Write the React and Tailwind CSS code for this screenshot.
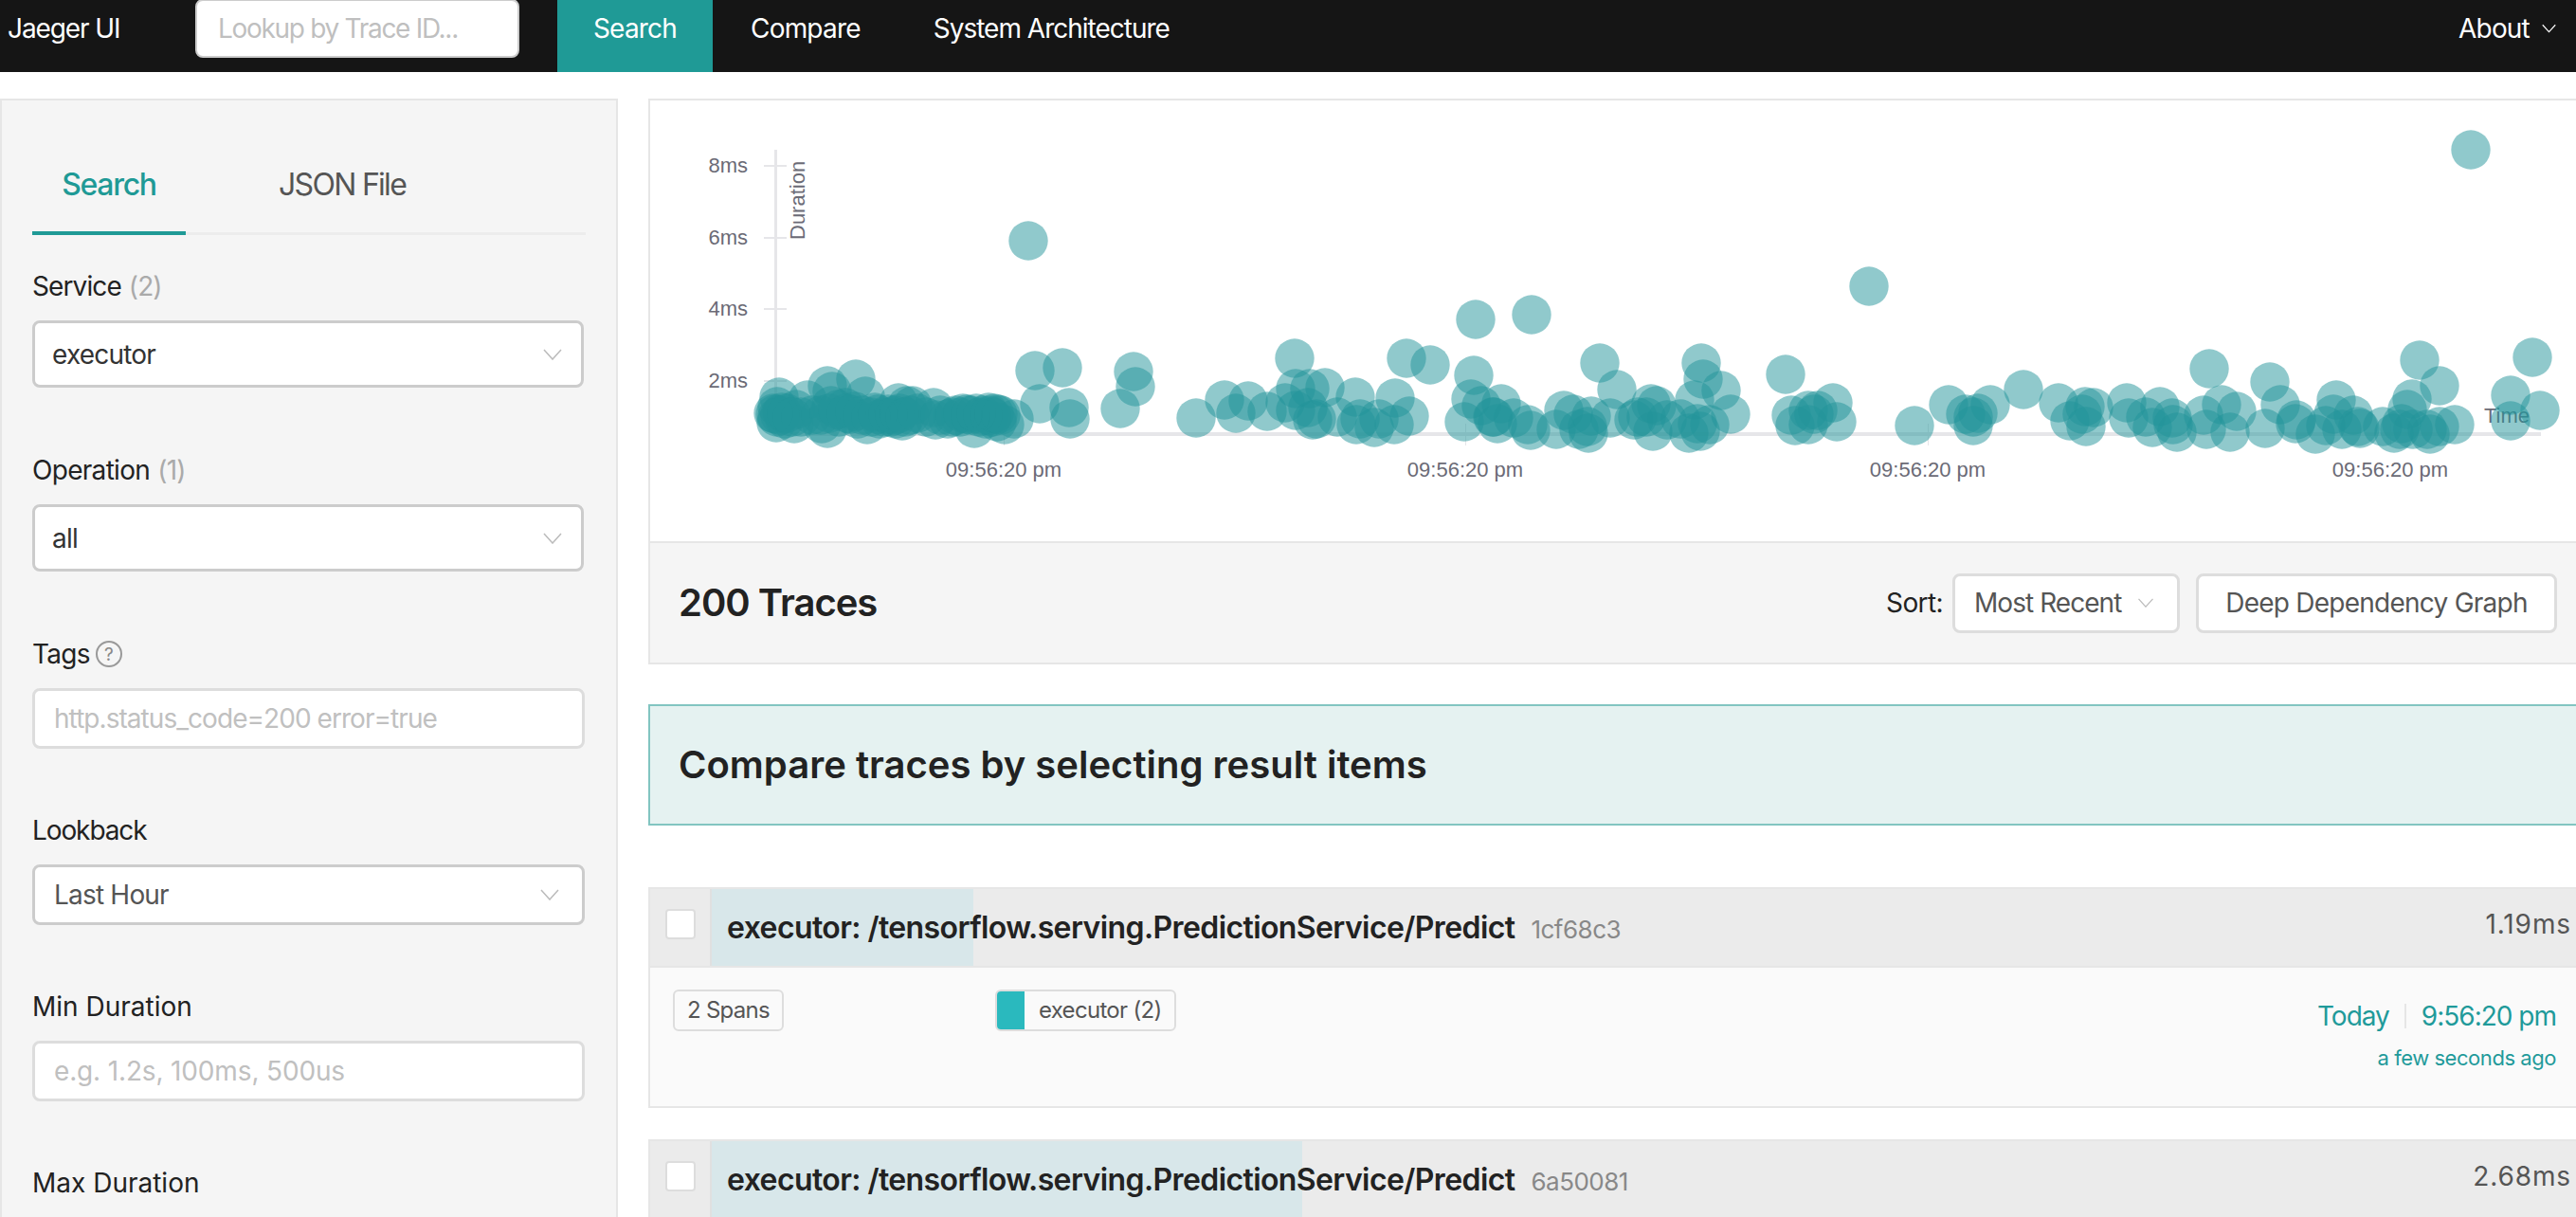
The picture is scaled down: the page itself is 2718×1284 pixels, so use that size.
import React from "react";

const font = { fontFamily: "Inter, 'Noto Sans', sans-serif" };

// scatter points, in page pixels
const dots = [
  [822,419],[820,429],[818,437],[819,446],[838,447],[852,422],[873,407],[878,413],[903,400],[913,418],[873,452],[867,447],[915,448],[892,430],[877,428],[897,437],[840,432],[857,438],[825,435],[923,435],[933,440],[940,440],[948,425],[957,428],[963,428],[960,438],[985,430],[977,440],[987,443],[1005,440],[1020,437],[1013,440],[1028,452],[1043,435],[1053,437],[1047,440],[1060,448],[1070,442],[1033,440],[1052,445],[820,440],[828,442],[845,440],[885,440],[905,442],[928,442],[945,442],[952,444],[1000,442],[1040,442],
  [816,436],[823,438],[830,436],[836,440],[866,438],[875,436],[884,432],[893,436],[902,434],[910,438],[919,440],[926,437],[937,437],[944,438],[949,436],[955,440],[968,436],[992,438],[1008,438],[1016,436],[1024,438],[1030,436],[1037,438],[1044,438],[1049,436],[1056,438],
  [1085,254],[1092,391],[1121,388],[1097,426],[1128,430],[1129,442],[1196,392],[1198,408],[1182,431],[1262,441],[1292,422],[1304,436],[1317,423],[1337,434],[1356,425],[1366,378],[1367,410],[1367,433],[1385,443],[1398,409],[1430,419],[1472,420],[1487,439],[1471,448],[1455,442],[1450,451],[1435,442],[1431,448],[1411,440],[1389,442],[1382,410],[1380,430],
  [1484,378],[1509,385],[1557,337],[1616,332],[1972,302],[1555,396],[1552,421],[1563,428],[1584,426],[1545,445],[1576,440],[1580,447],[1575,440],[1597,441],[1615,454],[1612,448],[1642,453],[1650,433],[1660,437],[1679,439],[1666,453],[1676,457],[1675,450],[1699,441],[1688,383],[1706,411],[1724,443],[1728,440],[1742,426],[1748,428],[1744,455],[1737,440],[1759,443],[1788,422],[1795,383],[1797,400],[1816,412],[1826,437],[1782,457],[1794,455],[1804,448],[1773,442],[1791,447],
  [1884,395],[1890,438],[1894,449],[1908,433],[1908,448],[1914,437],[1934,425],[1938,445],[1918,433],[2020,449],[2056,427],[2074,437],[2100,427],[2087,436],[2082,449],[2082,440],[2135,411],[2172,425],[2184,444],[2200,429],[2209,430],[2197,437],[2201,450],[2244,425],[2246,441],[2264,440],[2279,429],[2271,451],[2292,441],[2293,448],[2297,456],[2325,438],[2328,453],[2344,427],[2360,434],[2353,456],[2331,389],[2390,452],[2395,403],[2406,427],[2423,443],[2443,458],[2422,447],[2454,449],[2465,422],[2462,437],[2483,438],[2471,453],[2490,452],[2488,450],[2514,450],[2526,457],[2534,447],[2545,421],[2540,432],[2553,380],[2574,407],[2532,453],[2561,453],[2564,458],[2574,450],[2590,448],[2546,453],[2607,158],[2649,417],[2672,377],[2680,433],[2649,444],
];

function Chevron({ className }) {
  return (
    <svg className={className} viewBox="0 0 20 12" fill="none" stroke="currentColor" strokeWidth="1.5">
      <polyline points="1,1 10,11 19,1" />
    </svg>
  );
}

function Chart() {
  const axis = "#e6e6e9";
  const label = { fontFamily: "'Liberation Sans', Arial, sans-serif", fontSize: 22, fill: "#6b6b76" };
  return (
    <div className="h-[467px] border-l-2 border-t-2 border-[#e6e6e6] bg-white">
      <svg width="2032" height="465" viewBox="686 106 2032 465" className="block">
        <rect x="817" y="158" width="3" height="301" fill={axis} />
        <rect x="817" y="456" width="1864" height="4" fill={axis} />
        {[[175, "8ms"], [251, "6ms"], [326, "4ms"], [402, "2ms"]].map(([y, t]) => (
          <g key={t}>
            <rect x="806" y={y - 1} width="24" height="2" fill={axis} />
            <text x="789" y={y + 7} textAnchor="end" {...label}>{t}</text>
          </g>
        ))}
        {[1059, 1546, 2034, 2522].map((x) => (
          <g key={x}>
            <rect x={x} y="447" width="1" height="23" fill={axis} />
            <text x={x} y="503" textAnchor="middle" {...label}>09:56:20 pm</text>
          </g>
        ))}
        <text transform="translate(849 253) rotate(-90)" {...label}>Duration</text>
        <text x="2621" y="446" {...label}>Time</text>
        {dots.map(([x, y], i) => (
          <circle key={i} cx={x} cy={y} r="20.7" fill="#21939a" fillOpacity="0.5" />
        ))}
      </svg>
    </div>
  );
}

function Field({ label, count, help, children, className }) {
  return (
    <div className={className}>
      <div className="flex h-[38px] items-center text-[28px] leading-[38px] text-[#222]">
        {label}
        {count && <span className="ml-[8px] text-[#aaa]">{count}</span>}
        {help && (
          <span className="ml-[6px] flex h-[28px] w-[28px] items-center justify-center rounded-full border-2 border-[#999] text-[19px] leading-none tracking-normal text-[#888]">?</span>
        )}
      </div>
      {children}
    </div>
  );
}

function Select({ value, tall }) {
  return (
    <div
      className={`flex items-center justify-between rounded-lg border-[3px] border-[#ccc] bg-white ${
        tall ? "mt-[17px] h-[71px] w-[582px] pl-[18px] pr-[20px] text-[#333]" : "mt-[17px] h-[64px] w-[583px] pl-[20px] pr-[24px] text-[#555]"
      } text-[28px] tracking-[-0.8px]`}
    >
      <span>{value}</span>
      <Chevron className="h-[12px] w-[20px] text-[#bbb]" />
    </div>
  );
}

function TextInput({ placeholder, className }) {
  return (
    <div className={`mt-[17px] flex h-[64px] w-[583px] items-center rounded-lg border-[3px] border-[#ddd] bg-white pl-[20px] text-[28px] text-[#c0c0c0] ${className}`}>
      {placeholder}
    </div>
  );
}

function Sidebar() {
  return (
    <aside className="h-[1180px] w-[652px] shrink-0 border-l-2 border-r-2 border-t-2 border-[#e6e6e6] bg-[#f5f5f5] pl-[32px] pr-[32px]">
      <div className="mt-[52px] flex h-[90px] w-[584px] items-start border-b-[3px] border-[#ececec] text-[32px] leading-[74px]">
        <div className="-mb-[3px] flex h-[90px] w-[162px] justify-center border-b-[4px] border-[#1f9a96] font-medium tracking-[-1.3px] text-[#1f9a96]">Search</div>
        <div className="ml-[98px] tracking-[-1.7px] text-[#555]">JSON File</div>
      </div>
      <Field label="Service" count="(2)" className="mt-[35px] tracking-[-0.9px]"><Select value="executor" tall /></Field>
      <Field label="Operation" count="(1)" className="mt-[68px] tracking-[-0.7px]"><Select value="all" tall /></Field>
      <Field label="Tags" help className="mt-[68px] tracking-[-0.7px]"><TextInput placeholder="http.status_code=200 error=true" className="tracking-[-0.95px]" /></Field>
      <Field label="Lookback" className="mt-[67px] tracking-[-1.1px]"><Select value="Last Hour" /></Field>
      <Field label="Min Duration" className="mt-[67px]"><TextInput placeholder="e.g. 1.2s, 100ms, 500us" className="tracking-[-0.15px]" /></Field>
      <Field label="Max Duration" className="mt-[67px]" />
    </aside>
  );
}

function TraceItem({ id, barWidth, duration, body }) {
  return (
    <div className="border-l-2 border-t-2 border-[#e6e6e6]">
      <div className="flex h-[81px] bg-[#ebebeb]">
        <div className="flex w-[65px] shrink-0 items-center border-r-2 border-[#e0e0e0] pb-[7px] pl-[16px]">
          <div className="h-[32px] w-[32px] rounded-[4px] border-2 border-[#ddd] bg-white" />
        </div>
        <div className="relative flex flex-1 items-center justify-between pr-[5px]">
          <div className="absolute inset-y-0 left-0 bg-[#d8e7ea]" style={{ width: barWidth }} />
          <div className="relative ml-[16px] flex items-baseline">
            <span className="text-[32px] font-semibold tracking-[-0.6px] text-[#222]">executor: /tensorflow.serving.PredictionService/Predict</span>
            <span className="ml-[17px] text-[26px] tracking-[-0.5px] text-[#888]">{id}</span>
          </div>
          <span className="relative -mt-[8px] text-[28px] tracking-[0.9px] text-[#555]">{duration}</span>
        </div>
      </div>
      {body && (
        <div className="flex h-[150px] justify-between border-b-2 border-t-2 border-[#e6e6e6] bg-[#fafafa] pl-[24px] pr-[21px]">
          <div className="flex items-start pt-[23px] text-[24px] tracking-[-0.7px] text-[#555]">
            <div className="flex h-[44px] w-[117px] items-center justify-center rounded-md border-2 border-[#ddd]">2 Spans</div>
            <div className="ml-[223px] flex h-[44px] w-[191px] items-center rounded-md border-2 border-[#ddd]">
              <div className="h-full w-[29px] rounded-l-[4px] bg-[#2ab9be]" />
              <span className="ml-[15px]">executor (2)</span>
            </div>
          </div>
          <div className="pt-[33px] text-right text-[#1f9a9a]">
            <div className="flex items-center justify-end text-[28px] leading-[36px] tracking-[-1px]">
              Today
              <span className="mx-[16px] h-[26px] w-[2px] bg-[#e6e6e6]" />
              9:56:20 pm
            </div>
            <div className="mt-[8px] text-[22px] leading-[36px] tracking-[-0.45px]">a few seconds ago</div>
          </div>
        </div>
      )}
    </div>
  );
}

export default function App() {
  return (
    <div className="h-[1284px] overflow-hidden bg-white" style={font}>
      {/* Nav */}
      <nav className="flex h-[76px] items-center bg-[#151515] text-[28px] tracking-[-0.8px] text-white">
        <span className="mb-[16px] ml-[8px] w-[198px] tracking-[-1.1px]">Jaeger UI</span>
        <div className="mb-[16px] flex h-[62px] w-[342px] items-center rounded-lg border-2 border-[#ccc] bg-white pl-[22px] tracking-[-1.3px] text-[#bfbfbf]">Lookup by Trace ID...</div>
        <div className="ml-[40px] flex h-full w-[164px] items-center justify-center bg-[#1f9a96] pb-[16px]">Search</div>
        <span className="mb-[16px] ml-[40px]">Compare</span>
        <span className="mb-[16px] ml-[77px] tracking-[-1px]">System Architecture</span>
        <span className="mb-[16px] ml-auto">About</span>
        <Chevron className="mb-[16px] ml-[13px] mr-[21px] h-[10px] w-[15px]" />
      </nav>

      <div className="mt-[28px] flex">
        <Sidebar />
        <main className="ml-[32px] min-w-0 flex-1">
          <Chart />

          {/* Results header */}
          <div className="flex h-[130px] items-center justify-between border-b-2 border-l-2 border-t-2 border-[#e6e6e6] bg-[#f5f5f5] pl-[30px] pr-[20px]">
            <h2 className="text-[40px] font-semibold tracking-[-1px] text-[#222]">200 Traces</h2>
            <div className="flex items-center text-[28px]">
              <span className="tracking-[-0.6px] text-[#222]">Sort:</span>
              <div className="ml-[10px] flex h-[63px] w-[240px] items-center justify-between rounded-lg border-[3px] border-[#ddd] bg-white pl-[20px] pr-[24px] tracking-[-0.95px] text-[#555]">
                Most Recent
                <Chevron className="h-[10px] w-[18px] text-[#bbb]" />
              </div>
              <div className="ml-[17px] flex h-[63px] w-[381px] items-center justify-center rounded-lg border-[3px] border-[#ddd] bg-white tracking-[-0.75px] text-[#555]">Deep Dependency Graph</div>
            </div>
          </div>

          <div className="mt-[42px] flex h-[128px] items-center border-2 border-r-0 border-[#82c5c1] bg-[#e5f2f1] pl-[30px] text-[40px] font-semibold text-[#222]">
            Compare traces by selecting result items
          </div>

          <div className="mt-[65px]">
            <TraceItem id="1cf68c3" barWidth={276} duration="1.19ms" body />
          </div>
          <div className="mt-[33px]">
            <TraceItem id="6a50081" barWidth={623} duration="2.68ms" />
          </div>
        </main>
      </div>
    </div>
  );
}
